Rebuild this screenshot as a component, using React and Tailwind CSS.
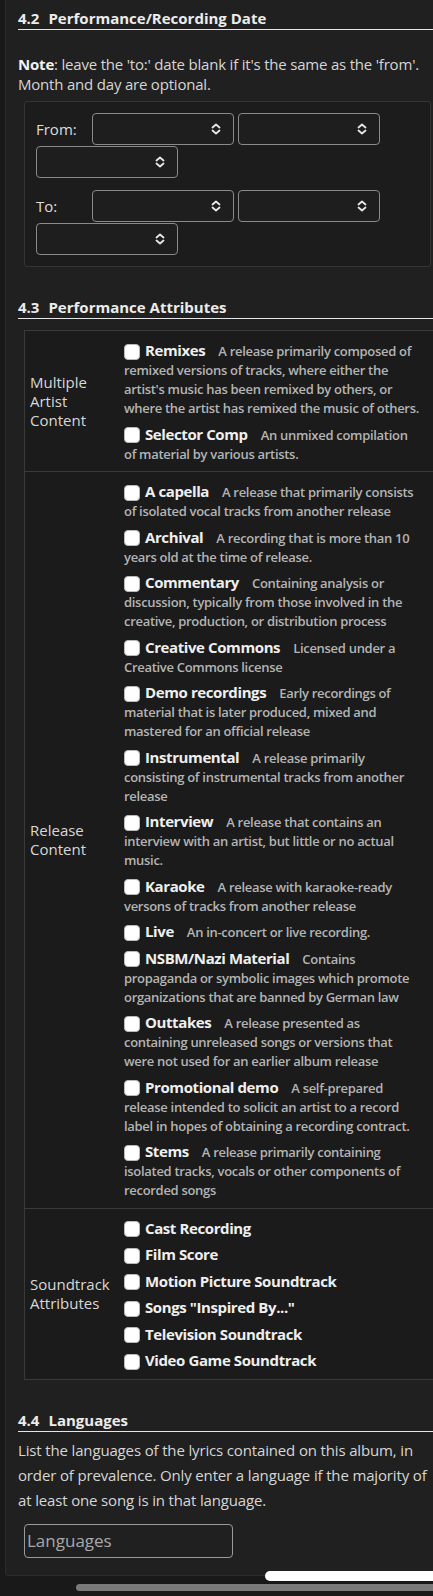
const multiple = [
  { name: 'Remixes', desc: "A release primarily composed of remixed versions of tracks, where either the artist's music has been remixed by others, or where the artist has remixed the music of others." },
  { name: 'Selector Comp', desc: 'An unmixed compilation of material by various artists.' },
]

const release = [
  { name: 'A capella', desc: 'A release that primarily consists of isolated vocal tracks from another release' },
  { name: 'Archival', desc: 'A recording that is more than 10 years old at the time of release.' },
  { name: 'Commentary', desc: 'Containing analysis or discussion, typically from those involved in the creative, production, or distribution process' },
  { name: 'Creative Commons', desc: 'Licensed under a Creative Commons license' },
  { name: 'Demo recordings', desc: 'Early recordings of material that is later produced, mixed and mastered for an official release' },
  { name: 'Instrumental', desc: 'A release primarily consisting of instrumental tracks from another release' },
  { name: 'Interview', desc: 'A release that contains an interview with an artist, but little or no actual music.' },
  { name: 'Karaoke', desc: 'A release with karaoke-ready versons of tracks from another release' },
  { name: 'Live', desc: 'An in-concert or live recording.' },
  { name: 'NSBM/Nazi Material', desc: 'Contains propaganda or symbolic images which promote organizations that are banned by German law' },
  { name: 'Outtakes', desc: 'A release presented as containing unreleased songs or versions that were not used for an earlier album release' },
  { name: 'Promotional demo', desc: 'A self-prepared release intended to solicit an artist to a record label in hopes of obtaining a recording contract.' },
  { name: 'Stems', desc: 'A release primarily containing isolated tracks, vocals or other components of recorded songs' },
]

const soundtrack = [
  { name: 'Cast Recording' },
  { name: 'Film Score' },
  { name: 'Motion Picture Soundtrack' },
  { name: 'Songs "Inspired By..."' },
  { name: 'Television Soundtrack' },
  { name: 'Video Game Soundtrack' },
]

function Heading({ num, title }) {
  return (
    <h2 className="text-[15px] leading-5 font-bold text-[#ececec] border-b border-[#e6e6e6] pb-px">
      <span>{num}</span>
      <span className="ml-[9px]">{title}</span>
    </h2>
  )
}

function Select() {
  return (
    <div className="w-[142px] h-[32px] border border-[#8a8a8a] rounded-[4px] bg-[#1e1e1e] flex items-center justify-end pr-[12px]">
      <svg width="10" height="12" viewBox="0 0 10 12" fill="none" stroke="#e8e8e8" strokeWidth="1.8" strokeLinecap="round" strokeLinejoin="round">
        <path d="M1.5 4.5 L5 1.5 L8.5 4.5" />
        <path d="M1.5 7.5 L5 10.5 L8.5 7.5" />
      </svg>
    </div>
  )
}

function DateRow({ label }) {
  return (
    <div className="flex flex-wrap items-center gap-x-1 gap-y-px">
      <span className="w-[52px] text-[15px] text-[#dcdcdc]">{label}</span>
      <Select />
      <Select />
      <Select />
    </div>
  )
}

function Item({ name, desc }) {
  return (
    <div className="mb-[7.5px] text-[16px] leading-[19px]">
      <span className="inline-block w-4 h-4 bg-white rounded-[4px] border border-[#bbb] align-middle mr-[5px]"></span>
      <span className="text-[15px] leading-[10px] font-bold tracking-[-0.4px] text-[#efefef]">{name}</span>
      {desc && (
        <span className="ml-[13px] text-[13px] leading-[10px] font-semibold tracking-[-0.3px] text-[#b4b4b4]">{desc}</span>
      )}
    </div>
  )
}

function Row({ label, items, last }) {
  return (
    <div className={`grid grid-cols-[99px_1fr] ${last ? '' : 'border-b border-[#3a3a3a]'}`}>
      <div className="flex items-center pl-[5px] text-[15px] leading-[19px] text-[#d8d8d8]">{label}</div>
      <div className="pt-[10px] pb-px pr-[12px]">
        {items.map((it) => (
          <Item key={it.name} name={it.name} desc={it.desc} />
        ))}
      </div>
    </div>
  )
}

export default function App() {
  return (
    <div className="relative w-[433px] h-[1596px] overflow-hidden bg-[#191919] font-['Open_Sans',sans-serif]">
      <div className="ml-[5px] bg-[#202020] border-l border-b border-[#2c2c2c] rounded-bl-[4px] pl-[12px] pt-2 pb-[17px]">
        {/* 4.2 */}
        <Heading num="4.2" title="Performance/Recording Date" />
        <p className="mt-[24px] text-[15px] leading-5 tracking-[-0.2px] text-[#d6d6d6]">
          <b className="text-[#f2f2f2]">Note</b>: leave the 'to:' date blank if it's the same as the 'from'. Month and day are optional.
        </p>
        <div className="mt-[7px] ml-[6px] mr-[2px] border border-[#343434] rounded-[3px] bg-[#1c1c1c] px-[11px] py-[11px] flex flex-col gap-3">
          <DateRow label="From:" />
          <DateRow label="To:" />
        </div>

        {/* 4.3 */}
        <div className="mt-[30px]">
          <Heading num="4.3" title="Performance Attributes" />
        </div>
        <div className="mt-[11px] ml-[6px] border border-r-0 border-[#3a3a3a] bg-[#1b1b1b]">
          <Row label="Multiple Artist Content" items={multiple} />
          <Row label="Release Content" items={release} />
          <Row label="Soundtrack Attributes" items={soundtrack} last />
        </div>

        {/* 4.4 */}
        <div className="mt-[30px]">
          <Heading num="4.4" title="Languages" />
        </div>
        <p className="mt-[6px] text-[15px] leading-[25px] tracking-[-0.15px] text-[#d6d6d6]">
          List the languages of the lyrics contained on this album, in order of prevalence. Only enter a language if the majority of at least one song is in that language.
        </p>
        <div className="mt-[11px] ml-[6px] w-[209px] h-[34px] border border-[#9a9a9a] rounded-[4px] bg-[#202020] flex items-center pl-[2px]">
          <span className="text-[17px] text-[#a8a8a8]">Languages</span>
        </div>
      </div>

      {/* scroll indicators */}
      <div className="absolute left-[265px] right-[-6px] top-[1571px] h-[10px] bg-white rounded-full"></div>
      <div className="absolute left-[76px] right-0 top-[1584px] h-[7px] bg-[#7a7a7a] rounded-l-full"></div>
    </div>
  )
}
